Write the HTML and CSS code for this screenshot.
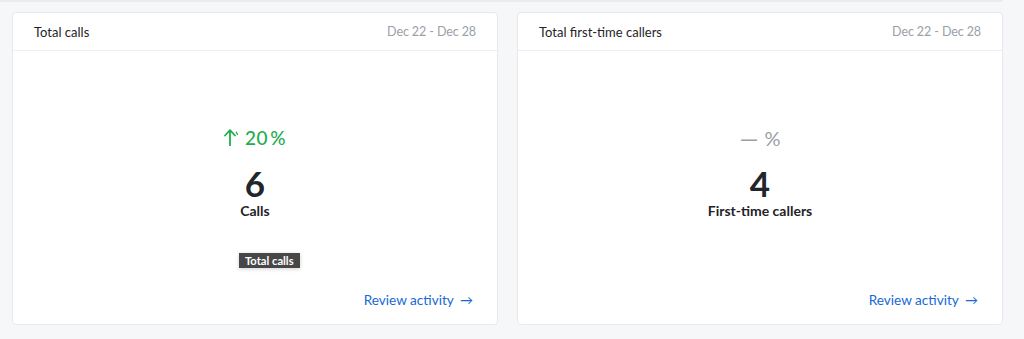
FILE: index.html
```html
<!DOCTYPE html>
<html lang="en">
<head>
<meta charset="utf-8">
<title>Calls overview</title>
<link rel="stylesheet" href="styles.css">
</head>
<body>
<div class="prev-card"></div>
<main class="grid">
  <section class="card">
    <header class="card-head">
      <h2 class="card-title">Total calls</h2>
      <span class="card-range">Dec 22 - Dec 28</span>
    </header>
    <div class="card-body">
      <div class="stat">
        <div class="delta delta-up">
          <svg class="delta-icon" width="14" height="17" viewBox="0 0 14 17" aria-hidden="true">
            <path d="M6 16.5V1.5M1 6.5L6 1.2L11 6.5" fill="none" stroke="currentColor" stroke-width="1.8" stroke-linecap="round" stroke-linejoin="round"/>
            <path d="M12.4 3.2L13.4 5.4" fill="none" stroke="currentColor" stroke-width="1.3" stroke-linecap="round"/>
          </svg>
          <span class="delta-num">20<span class="pct">%</span></span>
        </div>
        <div class="stat-value">6</div>
        <div class="stat-label">Calls</div>
      </div>
      <a class="review-link" href="#">Review activity <span class="arrow">→</span></a>
      <div class="tooltip">Total calls</div>
    </div>
  </section>
  <section class="card">
    <header class="card-head">
      <h2 class="card-title">Total first-time callers</h2>
      <span class="card-range">Dec 22 - Dec 28</span>
    </header>
    <div class="card-body">
      <div class="stat">
        <div class="delta delta-none"><span class="dash">—</span><span class="pct">%</span></div>
        <div class="stat-value">4</div>
        <div class="stat-label">First-time callers</div>
      </div>
      <a class="review-link" href="#">Review activity <span class="arrow">→</span></a>
    </div>
  </section>
</main>
</body>
</html>
```
FILE: styles.css
```css
html, body {
  margin: 0;
  padding: 0;
}
body {
  background: #f6f7f9;
  font-family: "Lato", "Source Sans Pro", "Liberation Sans", sans-serif;
  color: #22262b;
  width: 1024px;
  height: 339px;
  overflow: hidden;
}
.prev-card {
  width: 1003px;
  height: 2px;
  background: #eaecef;
  border-bottom-right-radius: 4px;
}
.grid {
  display: flex;
  gap: 19px;
  padding: 10px 0 0 12px;
}
.card {
  position: relative;
  width: 486px;
  height: 313px;
  box-sizing: border-box;
  background: #fff;
  border: 1px solid #e7e9ec;
  border-radius: 4px;
  display: flex;
  flex-direction: column;
}
.card-head {
  height: 38px;
  box-sizing: border-box;
  border-bottom: 1px solid #eceef1;
  display: flex;
  align-items: center;
  justify-content: space-between;
  padding: 0 21px 0 21px;
}
.card-title {
  margin: 0;
  font-size: 13px;
  font-weight: 400;
  color: #1f2328;
}
.card-range {
  font-size: 12.5px;
  letter-spacing: -0.1px;
  color: #9aa0a8;
}
.card-body {
  position: relative;
  flex: 1;
  display: flex;
  flex-direction: column;
  align-items: center;
  padding: 75px 24px 14px 24px;
}
.stat {
  flex: 1;
  display: flex;
  flex-direction: column;
  align-items: center;
}
.delta {
  height: 24px;
  display: flex;
  align-items: center;
  gap: 7px;
  font-size: 19px;
  line-height: 24px;
  font-weight: 500;
}
.delta-num {
  letter-spacing: 0.6px;
}
.delta-up .pct {
  margin-left: 2px;
}
.delta-up {
  color: #21ad4e;
}
.delta-none {
  color: #9aa0a8;
  font-weight: 400;
  gap: 6px;
}
.delta-none .dash {
  font-size: 24px;
  line-height: 24px;
}
.delta-none .pct {
  font-size: 20px;
}
.delta-icon {
  display: block;
  margin-top: -1px;
}
.stat-value {
  margin-top: 14px;
  font-size: 35px;
  line-height: 38px;
  font-weight: 700;
  color: #22262b;
}
.stat-label {
  font-size: 14px;
  line-height: 18px;
  font-weight: 700;
  color: #1f2328;
}
.review-link {
  align-self: flex-end;
  font-size: 13.6px;
  line-height: 20px;
  color: #1769d6;
  text-decoration: none;
}
.review-link .arrow {
  margin-left: 3px;
  font-size: 13px;
}
.tooltip {
  position: absolute;
  left: 226px;
  top: 202px;
  height: 15px;
  padding: 0 6px;
  background: #474747;
  color: #fff;
  font-size: 11.2px;
  font-weight: 700;
  line-height: 15px;
  box-shadow: 0 1px 4px rgba(0, 0, 0, 0.18);
}
```
